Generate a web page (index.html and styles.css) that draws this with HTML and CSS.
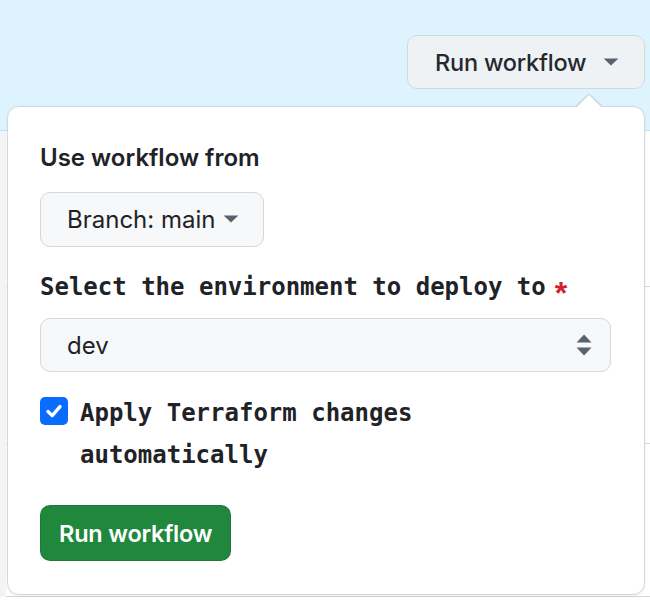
FILE: index.html
```html
<!DOCTYPE html>
<html lang="en">
<head>
<meta charset="utf-8">
<title>Run workflow</title>
<link rel="stylesheet" href="styles.css">
</head>
<body>
<div class="page">
  <header class="header">
    <button class="btn-run" type="button">
      <span>Run workflow</span>
      <svg class="caret" width="16" height="8" viewBox="0 0 16 8"><path d="M0.6 0.4 H15.4 L8 7.6 Z" fill="#59636e"/></svg>
    </button>
  </header>
  <div class="rows">
    <div class="row row-a"></div>
    <div class="row row-b"></div>
    <div class="row row-c"></div>
  </div>

  <div class="popover">
    <div class="heading">Use workflow from</div>
    <button class="btn-branch" type="button">
      <span>Branch: main</span>
      <svg class="caret" width="16" height="8" viewBox="0 0 16 8"><path d="M0.6 0.4 H15.4 L8 7.6 Z" fill="#59636e"/></svg>
    </button>
    <label class="field-label">Select the environment to deploy to<span class="req">*</span></label>
    <div class="select">
      <span>dev</span>
      <svg class="updown" width="16" height="22" viewBox="0 0 16 22"><path d="M8 0.5 L15.5 8.5 H0.5 Z" fill="#59636e"/><path d="M0.5 13.5 H15.5 L8 21.5 Z" fill="#59636e"/></svg>
    </div>
    <div class="check-row">
      <span class="checkbox">
        <svg width="20" height="20" viewBox="0 0 20 20"><path d="M4 10.5 L8.2 14.6 L16 5.6" fill="none" stroke="#fff" stroke-width="3.4" stroke-linecap="round" stroke-linejoin="round"/></svg>
      </span>
      <span class="check-label">Apply Terraform changes automatically</span>
    </div>
    <button class="btn-primary" type="button">Run workflow</button>
  </div>
</div>
</body>
</html>
```

FILE: styles.css
```css
* { box-sizing: border-box; }
html, body { margin: 0; padding: 0; }
body {
  width: 650px;
  height: 600px;
  overflow: hidden;
  background: #ffffff;
  font-family: Inter, "Liberation Sans", sans-serif;
  color: #1f2328;
}
.page {
  position: relative;
  width: 650px;
  height: 600px;
}
.header {
  height: 131px;
  background: #ddf4ff;
  border-bottom: 1px solid #b6e3ff;
  display: flex;
  justify-content: flex-end;
  align-items: flex-start;
  padding: 35px 5px 0 0;
}
.btn-run {
  height: 54px;
  width: 238px;
  display: flex;
  align-items: center;
  padding: 0 25px 0 27px;
  background: #eff2f5;
  border: 1.5px solid #d1d9e0;
  border-radius: 10px;
  font-family: inherit;
  font-size: 23.5px;
  letter-spacing: -0.2px;
  font-weight: 500;
  color: #25292e;
}
.btn-run .caret { margin-left: auto; }
.rows {
  border-left: 6px solid #f3f4f6;
}
.row {
  border-bottom: 1px solid #d1d9e0;
}
.row-a { height: 156px; }
.row-b { height: 157px; }
.row-c { height: 153px; }

.popover {
  position: absolute;
  left: 7px;
  top: 106px;
  width: 638px;
  height: 489px;
  background: #ffffff;
  border: 1.5px solid #d1d9e0;
  border-radius: 12px;
  box-shadow: 0 1px 3px rgba(31, 35, 40, 0.08);
  padding: 33px 32px;
  display: flex;
  flex-direction: column;
  align-items: flex-start;
}
.popover::before {
  content: "";
  position: absolute;
  top: -14px;
  left: 566px;
  border-left: 15px solid transparent;
  border-right: 15px solid transparent;
  border-bottom: 14px solid #d1d9e0;
}
.popover::after {
  content: "";
  position: absolute;
  top: -12px;
  left: 568px;
  border-left: 13px solid transparent;
  border-right: 13px solid transparent;
  border-bottom: 13px solid #ffffff;
}
.heading {
  font-size: 24px;
  line-height: 36px;
  font-weight: 600;
}
.btn-branch {
  margin-top: 16px;
  height: 55px;
  width: 224px;
  display: flex;
  align-items: center;
  padding: 0 24px 0 26px;
  background: #f6f8fa;
  border: 1.5px solid #d1d9e0;
  border-radius: 10px;
  font-family: inherit;
  font-size: 24px;
  font-weight: 400;
  color: #1f2328;
}
.btn-branch .caret { margin-left: auto; }
.field-label {
  margin-top: 22px;
  font-family: "DejaVu Sans Mono", "Liberation Mono", monospace;
  font-weight: 700;
  font-size: 24px;
  line-height: 36px;
  color: #1f2328;
  white-space: nowrap;
}
.req {
  color: #cf222e;
  margin-left: 9px;
  font-family: "Liberation Sans", sans-serif;
  font-weight: 700;
  font-size: 32px;
  line-height: 0;
  vertical-align: -9px;
}
.select {
  margin-top: 13px;
  width: 571px;
  height: 55px;
  display: flex;
  align-items: center;
  padding: 0 18px 0 26px;
  background: #f6f8fa;
  border: 1.5px solid #d1d9e0;
  border-radius: 10px;
  font-size: 24px;
}
.select .updown { margin-left: auto; }
.check-row {
  margin-top: 20px;
  display: flex;
  align-items: flex-start;
  gap: 12px;
  width: 571px;
}
.checkbox {
  flex: none;
  margin-top: 5px;
  width: 28px;
  height: 28px;
  border-radius: 5px;
  background: #0a6cff;
  display: flex;
  align-items: center;
  justify-content: center;
}
.check-label {
  font-family: "DejaVu Sans Mono", "Liberation Mono", monospace;
  font-weight: 700;
  font-size: 24px;
  line-height: 42px;
}
.btn-primary {
  margin-top: 29px;
  height: 56px;
  background: #1f883d;
  border: 1px solid rgba(31, 35, 40, 0.15);
  border-radius: 10px;
  color: #ffffff;
  font-family: inherit;
  font-size: 23.5px;
  letter-spacing: -0.2px;
  font-weight: 600;
  padding: 0 18px;
  white-space: nowrap;
}
```
